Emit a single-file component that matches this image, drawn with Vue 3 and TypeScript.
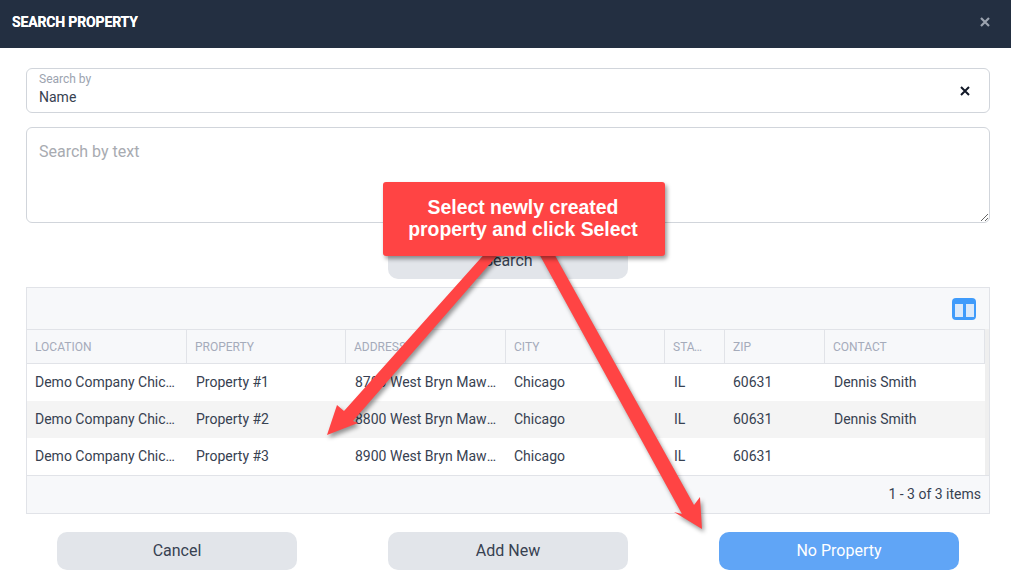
<template>
  <div class="dialog">
    <header class="title-bar">
      <h1>SEARCH PROPERTY</h1>
      <svg class="close" width="12" height="12" viewBox="0 0 12 12" aria-hidden="true">
        <path d="M2 2l8 8M10 2l-8 8" />
      </svg>
    </header>

    <main class="body">
      <div class="select-field">
        <div class="select-value">
          <span class="select-label">Search by</span>
          <span class="select-text">Name</span>
        </div>
        <svg class="clear" width="12" height="12" viewBox="0 0 12 12" aria-hidden="true">
          <path d="M2 2l8 8M10 2l-8 8" />
        </svg>
      </div>

      <textarea class="search-text" placeholder="Search by text"></textarea>

      <div class="search-row">
        <button type="button" class="btn">Search</button>
      </div>

      <section class="grid">
        <div class="toolbar">
          <svg width="24" height="22" viewBox="0 0 24 22" aria-hidden="true">
            <rect width="24" height="22" rx="4" fill="#3f9bfb" />
            <rect x="3" y="6" width="8" height="13" fill="#dbe9fa" />
            <rect x="14" y="6" width="8" height="13" fill="#dbe9fa" />
          </svg>
        </div>

        <div class="table-wrap">
          <table>
            <colgroup>
              <col v-for="col in columns" :key="col.key" :style="{ width: col.width + 'px' }" />
            </colgroup>
            <thead>
              <tr>
                <th v-for="col in columns" :key="col.key">{{ col.label }}</th>
              </tr>
            </thead>
            <tbody>
              <tr v-for="row in rows" :key="row.property">
                <td>{{ row.location }}</td>
                <td>{{ row.property }}</td>
                <td>{{ row.address }}</td>
                <td>{{ row.city }}</td>
                <td>{{ row.state }}</td>
                <td>{{ row.zip }}</td>
                <td>{{ row.contact }}</td>
              </tr>
            </tbody>
          </table>
        </div>

        <footer class="pager">1 - 3 of 3 items</footer>
      </section>

      <div class="actions">
        <button type="button" class="btn">Cancel</button>
        <button type="button" class="btn">Add New</button>
        <button type="button" class="btn primary">No Property</button>
      </div>
    </main>

    <!-- annotation drawn over the screenshot -->
    <svg class="arrows" width="1011" height="579" viewBox="0 0 1011 579" aria-hidden="true">
      <polygon points="488,250 502,250 353,421 358,423 327,435 337,405 344,411" />
      <polygon points="537,250 552,250 694,505 700,497 702,529 674,512 682,514" />
    </svg>
    <div class="callout">Select newly created<br />property and click Select</div>
  </div>
</template>

<script setup lang="ts">
interface Column {
  key: string
  label: string
  width: number
}

interface PropertyRow {
  location: string
  property: string
  address: string
  city: string
  state: string
  zip: string
  contact: string
}

const columns: Column[] = [
  { key: 'location', label: 'Location', width: 160 },
  { key: 'property', label: 'Property', width: 159 },
  { key: 'address', label: 'Address', width: 160 },
  { key: 'city', label: 'City', width: 159 },
  { key: 'state', label: 'State', width: 60 },
  { key: 'zip', label: 'Zip', width: 100 },
  { key: 'contact', label: 'Contact', width: 160 },
]

const rows: PropertyRow[] = [
  {
    location: 'Demo Company Chicago',
    property: 'Property #1',
    address: '8700 West Bryn Mawr Avenue',
    city: 'Chicago',
    state: 'IL',
    zip: '60631',
    contact: 'Dennis Smith',
  },
  {
    location: 'Demo Company Chicago',
    property: 'Property #2',
    address: '8800 West Bryn Mawr Avenue',
    city: 'Chicago',
    state: 'IL',
    zip: '60631',
    contact: 'Dennis Smith',
  },
  {
    location: 'Demo Company Chicago',
    property: 'Property #3',
    address: '8900 West Bryn Mawr Avenue',
    city: 'Chicago',
    state: 'IL',
    zip: '60631',
    contact: '',
  },
]
</script>

<style>
html,
body {
  margin: 0;
  overflow: hidden;
  background: #fff;
}
</style>

<style scoped>
.dialog {
  position: relative;
  width: 1011px;
  height: 579px;
  overflow: hidden;
  font-family: Roboto, 'Liberation Sans', sans-serif;
  color: #374151;
  background: #fff;
}

.title-bar {
  display: flex;
  align-items: center;
  justify-content: space-between;
  box-sizing: border-box;
  height: 48px;
  padding: 0 20px 5px 12px;
  background: #232f41;
}

.title-bar h1 {
  margin: 0;
  font-size: 14px;
  font-weight: 700;
  letter-spacing: -0.15px;
  color: #fff;
  text-shadow: 0 0 0.6px #fff;
}

.close path {
  fill: none;
  stroke: #9ca3af;
  stroke-width: 2.2;
}

.body {
  display: flex;
  flex-direction: column;
  padding: 20px 21px 0 26px;
}

.select-field {
  display: flex;
  align-items: center;
  justify-content: space-between;
  box-sizing: border-box;
  height: 45px;
  padding: 0 18px 4px 12px;
  border: 1px solid #d1d5db;
  border-radius: 6px;
}

.select-value {
  display: flex;
  flex-direction: column;
}

.select-label {
  font-size: 12px;
  line-height: 16px;
  color: #9ca3af;
}

.select-text {
  font-size: 14px;
  line-height: 20px;
  color: #374151;
}

.clear {
  margin-top: 4px;
}

.clear path {
  fill: none;
  stroke: #111827;
  stroke-width: 2;
}

.search-text {
  box-sizing: border-box;
  display: block;
  width: 100%;
  height: 96px;
  margin-top: 14px;
  padding: 14px 12px;
  border: 1px solid #d1d5db;
  border-radius: 6px;
  outline: none;
  font-family: inherit;
  font-size: 16px;
  line-height: 20px;
  color: #374151;
}

.search-text::placeholder {
  color: #a8abb1;
  opacity: 1;
}

.search-row {
  display: flex;
  justify-content: center;
  margin-top: 18px;
}

.btn {
  box-sizing: border-box;
  width: 240px;
  height: 38px;
  padding: 0;
  border: none;
  border-radius: 10px;
  background: #e2e5ea;
  font-family: inherit;
  font-size: 16px;
  color: #374151;
}

.btn.primary {
  background: #60a5f6;
  color: #fff;
}

.grid {
  display: flex;
  flex-direction: column;
  margin-top: 8px;
  border: 1px solid #e1e3e8;
  background: #f7f8fa;
}

.toolbar {
  display: flex;
  align-items: center;
  justify-content: flex-end;
  box-sizing: border-box;
  height: 41px;
  padding: 0 13px 0 0;
}

.table-wrap {
  background: #efefef;
}

table {
  width: 958px;
  table-layout: fixed;
  border-collapse: separate;
  border-spacing: 0;
  font-size: 14px;
}

th {
  box-sizing: border-box;
  height: 35px;
  padding: 0 18px 0 8px;
  border-top: 1px solid #e1e3e8;
  border-bottom: 1px solid #e1e3e8;
  border-right: 1px solid #e1e3e8;
  background: #f7f8fa;
  text-align: left;
  font-size: 12px;
  font-weight: 400;
  text-transform: uppercase;
  color: #a5abba;
  white-space: nowrap;
  overflow: hidden;
  text-overflow: ellipsis;
}

td {
  box-sizing: border-box;
  height: 37px;
  padding: 0 8px 1px;
  background: #fff;
  color: #374151;
  white-space: nowrap;
  overflow: hidden;
  text-overflow: ellipsis;
}

td:nth-child(2),
td:nth-child(3),
td:nth-child(5),
td:nth-child(7) {
  padding-left: 9px;
}

tbody tr:nth-child(2) td {
  background: #f4f4f4;
}

.pager {
  box-sizing: border-box;
  height: 38px;
  padding: 0 8px;
  border-top: 1px solid #e1e3e8;
  font-size: 14px;
  line-height: 37px;
  text-align: right;
  color: #374151;
}

.actions {
  display: flex;
  justify-content: space-between;
  margin-top: 18px;
  padding: 0 31px;
}

.actions .btn {
  padding-bottom: 1px;
}

.arrows {
  position: absolute;
  top: 0;
  left: 0;
  pointer-events: none;
  filter: drop-shadow(2px 3px 2px rgba(0, 0, 0, 0.4));
}

.arrows polygon {
  fill: #ff4444;
}

.callout {
  position: absolute;
  top: 182px;
  left: 383px;
  display: flex;
  align-items: center;
  justify-content: center;
  box-sizing: border-box;
  width: 282px;
  height: 74px;
  padding: 0 2px 2px 0;
  border-radius: 3px;
  background: #ff4444;
  box-shadow: 2px 3px 4px rgba(0, 0, 0, 0.4);
  text-align: center;
  font-family: 'Liberation Sans', Arial, sans-serif;
  font-size: 19.4px;
  font-weight: 700;
  line-height: 22px;
  color: #fff;
}
</style>
